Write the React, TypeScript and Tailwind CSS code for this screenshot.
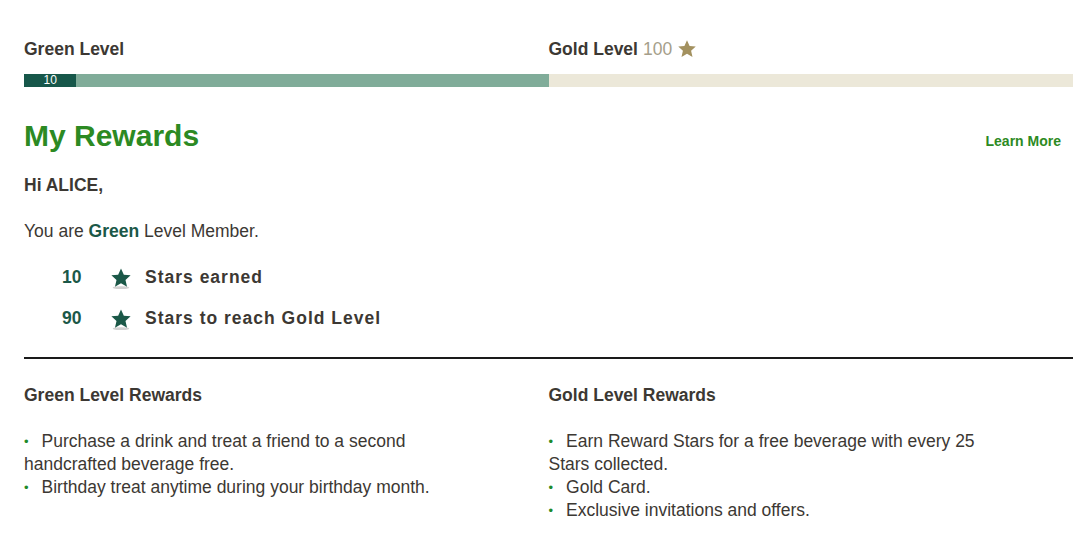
import { ReactNode } from "react";

const Star = ({ className = "", shadow = false }: { className?: string; shadow?: boolean }) => (
  <svg viewBox="0 0 24 24" className={className} aria-hidden="true">
    {shadow && <ellipse cx="12" cy="22.5" rx="9" ry="1.6" fill="#bdbdbd" opacity="0.7" />}
    <path fill="currentColor" d="M12 1.5l3.1 6.9 7.4.7-5.6 5 1.7 7.4L12 17.6l-6.6 3.9 1.7-7.4-5.6-5 7.4-.7z" />
  </svg>
);

const Bullet = ({ children }: { children: ReactNode }) => (
  <li>
    <span className="text-[#1e8a2a] text-[13px] leading-none align-[1px] mr-[13px]">•</span>
    {children}
  </li>
);

const StarRow = ({ count, label }: { count: number; label: string }) => (
  <div className="flex items-center h-[41px]">
    <span className="w-[48px] font-bold text-[#1b5848]">{count}</span>
    <Star shadow className="w-[22px] h-[22px] text-[#1b5848]" />
    <span className="ml-[13px] font-bold tracking-[1px] text-[#3c3833]">{label}</span>
  </div>
);

export default function App() {
  return (
    <div className="bg-white min-h-[554px] px-[24px] pt-[36px] pr-[16px] text-[17.5px] text-[#3c3833] font-['Liberation_Sans',Arial,sans-serif]">
      <div className="grid grid-cols-2 h-[26px] items-center">
        <div className="font-bold">Green Level</div>
        <div className="flex items-center">
          <span className="font-bold">Gold Level</span>
          <span className="ml-[5px] text-[#a59e8a]">100</span>
          <Star className="ml-[5px] w-[20px] h-[20px] text-[#a3915f]" />
        </div>
      </div>

      <div className="mt-[12px] h-[13px] flex bg-[#ece8d9]">
        <div className="w-1/2 flex bg-[#80ac99]">
          <div className="w-[10%] bg-[#17574a] text-white text-[12px] leading-[13px] text-center">10</div>
        </div>
      </div>

      <div className="flex items-center justify-between mt-[32px] pr-[12px]">
        <h1 className="text-[30px] font-bold text-[#2c8a23] leading-[34px]">My Rewards</h1>
        <a href="#" className="text-[14px] font-bold text-[#2c8a23] mt-[10px]">Learn More</a>
      </div>

      <p className="mt-[22px] font-bold leading-[20px]">Hi ALICE,</p>
      <p className="mt-[26px] leading-[20px]">
        You are <span className="font-bold text-[#1b5848]">Green</span> Level Member.
      </p>

      <div className="mt-[16px] pl-[38px]">
        <StarRow count={10} label="Stars earned" />
        <StarRow count={90} label="Stars to reach Gold Level" />
      </div>

      <div className="mt-[18px] border-t-2 border-[#1a1a1a]" />

      <div className="grid grid-cols-2 mt-[26px]">
        <div>
          <h2 className="font-bold leading-[20px]">Green Level Rewards</h2>
          <ul className="mt-[25px] leading-[23px] max-w-[420px]">
            <Bullet>Purchase a drink and treat a friend to a second handcrafted beverage free.</Bullet>
            <Bullet>Birthday treat anytime during your birthday month.</Bullet>
          </ul>
        </div>
        <div>
          <h2 className="font-bold leading-[20px]">Gold Level Rewards</h2>
          <ul className="mt-[25px] leading-[23px] max-w-[440px]">
            <Bullet>Earn Reward Stars for a free beverage with every 25 Stars collected.</Bullet>
            <Bullet>Gold Card.</Bullet>
            <Bullet>Exclusive invitations and offers.</Bullet>
          </ul>
        </div>
      </div>
    </div>
  );
}
